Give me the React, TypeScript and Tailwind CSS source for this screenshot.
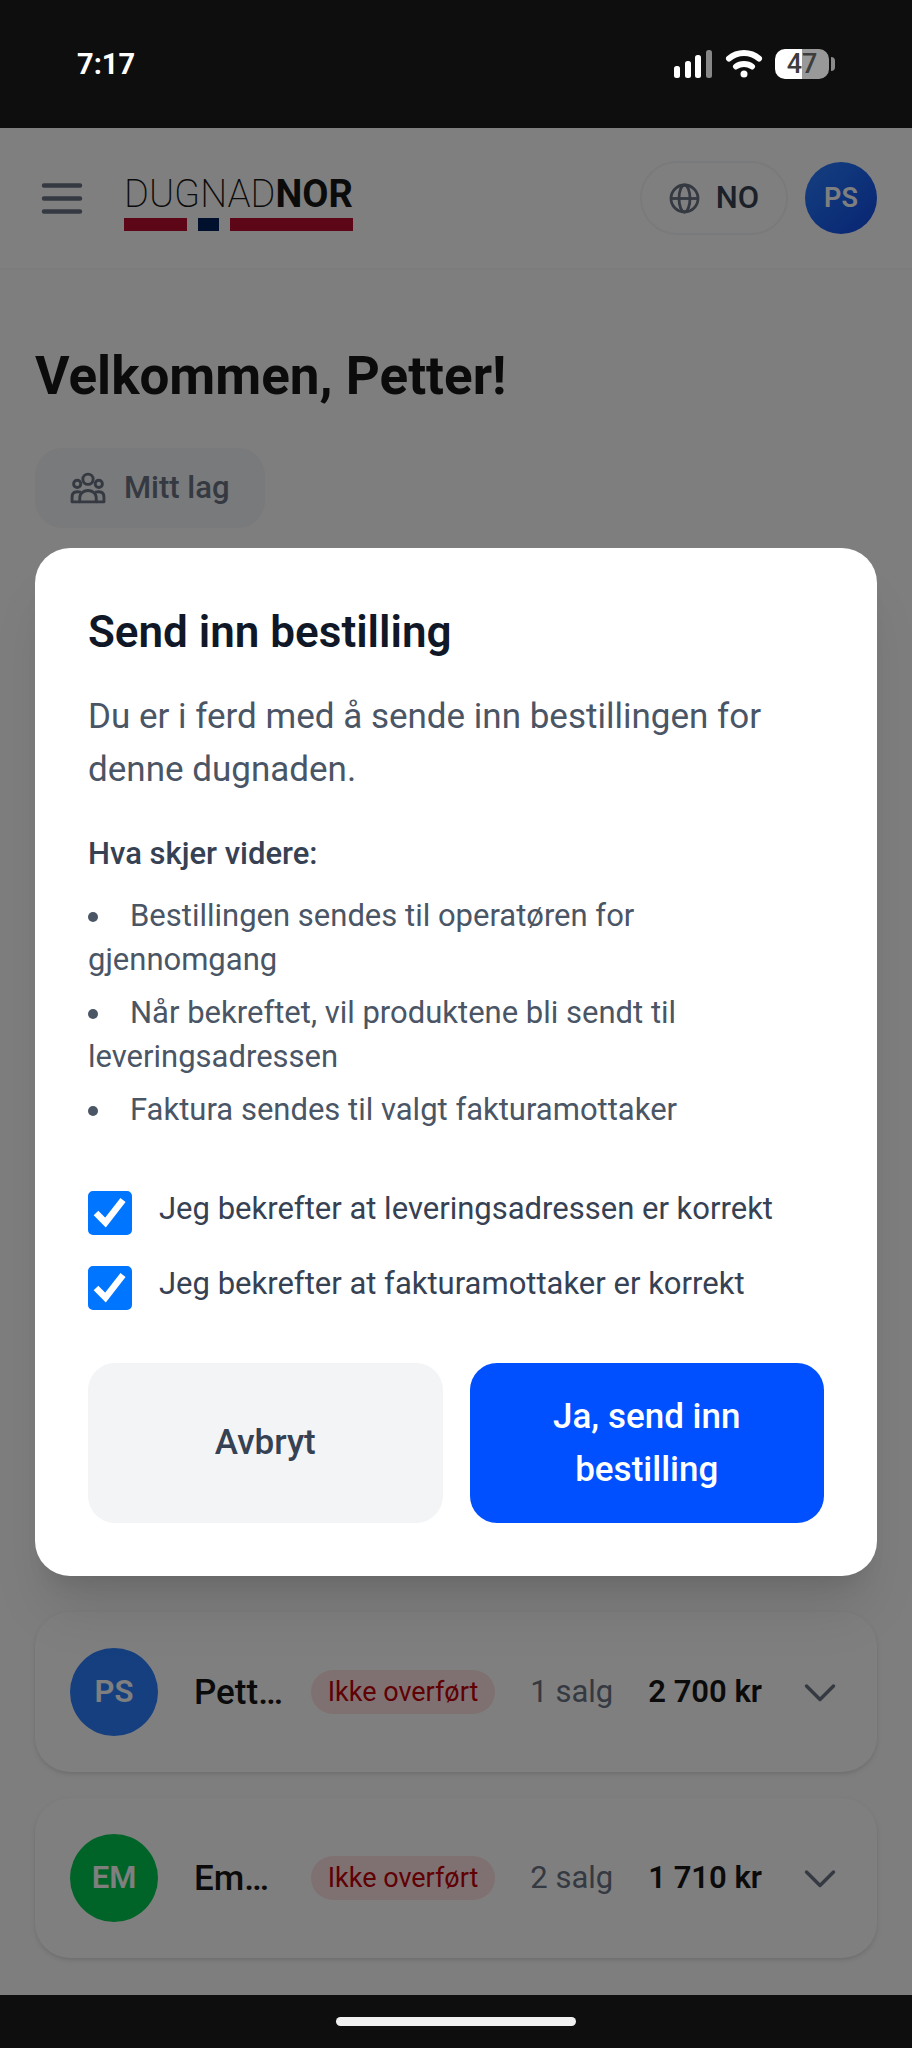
import React from "react";

interface Seller {
  initials: string;
  color: string;
  name: string;
  status: string;
  sales: string;
  total: string;
}

const sellers: Seller[] = [
  {
    initials: "PS",
    color: "bg-[#2b7fff]",
    name: "Pett…",
    status: "Ikke overført",
    sales: "1 salg",
    total: "2 700 kr",
  },
  {
    initials: "EM",
    color: "bg-[#00c950]",
    name: "Em…",
    status: "Ikke overført",
    sales: "2 salg",
    total: "1 710 kr",
  },
];

const nextSteps = [
  "Bestillingen sendes til operatøren for gjennomgang",
  "Når bekreftet, vil produktene bli sendt til leveringsadressen",
  "Faktura sendes til valgt fakturamottaker",
];

const confirmations = [
  { id: "address", label: "Jeg bekrefter at leveringsadressen er korrekt" },
  { id: "invoice", label: "Jeg bekrefter at fakturamottaker er korrekt" },
];

function StatusBar() {
  return (
    <div className="flex h-32 shrink-0 items-center justify-between bg-[#0e0e0e] px-[77px] text-white">
      <span className="text-[29px] leading-9 font-bold">7:17</span>
      <div className="flex items-center gap-3">
        <svg width="40" height="30" viewBox="0 0 40 30" fill="currentColor">
          <rect x="1" y="17" width="6" height="12" rx="2.5" />
          <rect x="12" y="12" width="6" height="17" rx="2.5" />
          <rect x="22" y="6" width="6" height="23" rx="2.5" />
          <rect x="33" y="1" width="6" height="28" rx="2.5" opacity=".5" />
        </svg>
        <svg
          width="38"
          height="30"
          viewBox="0 0 38 30"
          fill="none"
          stroke="currentColor"
          strokeWidth="6"
          strokeLinecap="round"
        >
          <path d="M4 9.500C12.500 2 25.500 2 34 9.500" />
          <path d="M11 17.500C15.500 14 22.500 14 27 17.500" />
          <circle cx="19" cy="25" r="3.500" fill="currentColor" stroke="none" />
        </svg>
        <div className="flex items-center gap-[2px]">
          <div className="flex h-[30px] w-[54px] items-center justify-center rounded-[10px] bg-linear-to-r from-white from-50% to-[#999999] to-50% text-[27px] leading-none font-medium text-[#3d3d3d]">
            47
          </div>
          <div className="h-[14px] w-1 rounded-r-full bg-[#8a8a8a]" />
        </div>
      </div>
    </div>
  );
}

function Logo() {
  return (
    <a href="#" aria-label="DugnadNor" className="block pt-[6px] text-[#171717]">
      <span className="block text-[38px] leading-[47px] whitespace-nowrap">
        <span className="font-extralight">DUGNAD</span>
        <span className="font-bold">NOR</span>
      </span>
      <span className="flex h-[13px]">
        <span className="w-[63px] bg-[#ba0c2f]" />
        <span className="ml-[11px] w-[21px] bg-[#00205b]" />
        <span className="ml-[11px] flex-1 bg-[#ba0c2f]" />
      </span>
    </a>
  );
}

function Header() {
  return (
    <header className="flex h-[142px] items-center border-b-2 border-[#f9f9f9] bg-white px-[35px]">
      <button type="button" aria-label="Meny" className="mr-9 text-gray-500">
        <svg
          width="53"
          height="53"
          viewBox="0 0 53 53"
          fill="none"
          stroke="currentColor"
          strokeWidth="4.500"
          strokeLinecap="round"
        >
          <path d="M9 13.500H45M9 26.500H45M9 39.500H45" />
        </svg>
      </button>
      <Logo />
      <div className="ml-auto flex items-center gap-[17px]">
        <button
          type="button"
          className="flex h-[74px] items-center gap-4 rounded-full border-2 border-gray-100 px-[27px] text-[31px] font-medium text-gray-700"
        >
          <svg
            width="31"
            height="31"
            viewBox="0 0 31 31"
            fill="none"
            stroke="#6a7282"
            strokeWidth="2.800"
          >
            <circle cx="15.500" cy="15.500" r="13.500" />
            <ellipse cx="15.500" cy="15.500" rx="5.500" ry="13.500" />
            <path d="M2 15.500H29" />
          </svg>
          NO
        </button>
        <button
          type="button"
          className="size-[72px] rounded-full bg-linear-to-br from-[#2b7fff] to-[#1447e6] text-[27px] font-semibold text-white"
        >
          PS
        </button>
      </div>
    </header>
  );
}

function SellerCard({ initials, color, name, status, sales, total }: Seller) {
  return (
    <li className="flex items-center rounded-[35px] bg-white px-[35px] py-9 shadow-[0_2px_6px_rgba(0,0,0,0.1),0_2px_4px_-2px_rgba(0,0,0,0.1)]">
      <span
        className={`flex size-[88px] shrink-0 items-center justify-center rounded-full text-[31px] font-semibold text-white ${color}`}
      >
        {initials}
      </span>
      <span className="ml-9 flex-1 truncate text-[35px] leading-[53px] font-medium text-[#171717]">
        {name}
      </span>
      <span className="rounded-full bg-[#ffe2e2] px-[17px] text-[27px] leading-[44px] text-[#c10007]">
        {status}
      </span>
      <span className="ml-[35px] text-[31px] leading-[44px] text-gray-500">
        {sales}
      </span>
      <span className="ml-[35px] text-[31px] leading-[44px] font-semibold text-[#171717]">
        {total}
      </span>
      <button
        type="button"
        aria-label="Vis detaljer"
        className="ml-9 text-gray-500"
      >
        <svg
          width="44"
          height="44"
          viewBox="0 0 44 44"
          fill="none"
          stroke="currentColor"
          strokeWidth="3.500"
          strokeLinecap="round"
          strokeLinejoin="round"
        >
          <path d="M8.500 16L22 29.500L35.500 16" />
        </svg>
      </button>
    </li>
  );
}

function Checkbox({ id }: { id: string }) {
  return (
    <span className="relative mt-1 size-[44px] shrink-0">
      <input
        id={id}
        type="checkbox"
        defaultChecked
        className="peer block size-full appearance-none rounded-[5px] border-2 border-gray-500 checked:border-[#0075ff] checked:bg-[#0075ff]"
      />
      <svg
        viewBox="0 0 44 44"
        fill="none"
        stroke="white"
        strokeWidth="6.500"
        className="pointer-events-none absolute inset-0 hidden size-full peer-checked:block"
      >
        <path d="M8 22L17.500 31.500L35 9" />
      </svg>
    </span>
  );
}

function ConfirmDialog() {
  return (
    <div
      role="dialog"
      aria-modal="true"
      aria-labelledby="dialog-title"
      className="w-full rounded-[35px] bg-white p-[53px] shadow-[0_44px_55px_-11px_rgba(0,0,0,0.1),0_18px_22px_-13px_rgba(0,0,0,0.1)]"
    >
      <h2
        id="dialog-title"
        className="text-[44px] leading-[62px] font-semibold text-gray-900"
      >
        Send inn bestilling
      </h2>
      <p className="mt-[27px] text-[35px] leading-[53px] text-gray-600">
        Du er i ferd med å sende inn bestillingen for denne dugnaden.
      </p>
      <h3 className="mt-9 text-[31px] leading-[44px] font-medium text-gray-700">
        Hva skjer videre:
      </h3>
      <ul className="mt-[18px] list-inside list-disc space-y-[9px] text-[31px] leading-[44px] text-gray-600">
        {nextSteps.map((step) => (
          <li key={step}>{step}</li>
        ))}
      </ul>
      <div className="mt-[55px] space-y-[27px]">
        {confirmations.map((c) => (
          <div key={c.id} className="flex items-start gap-[27px]">
            <Checkbox id={c.id} />
            <label
              htmlFor={c.id}
              className="text-[31px] leading-[44px] text-gray-700"
            >
              {c.label}
            </label>
          </div>
        ))}
      </div>
      <div className="mt-[53px] grid grid-cols-2 gap-[27px] text-[35px] leading-[53px] font-medium">
        <button
          type="button"
          className="rounded-[27px] bg-gray-100 p-[27px] text-gray-700"
        >
          Avbryt
        </button>
        <button
          type="button"
          className="rounded-[27px] bg-[#0050ff] p-[27px] text-white"
        >
          Ja, send inn bestilling
        </button>
      </div>
    </div>
  );
}

export default function App() {
  return (
    <div className="flex min-h-screen flex-col font-[Roboto,sans-serif]">
      <StatusBar />
      <div className="relative flex flex-1 flex-col bg-[#fdfdfd]">
        <Header />
        <main className="flex flex-1 flex-col px-[35px] pt-[71px] pb-[37px]">
          <h1 className="text-[53px] leading-[71px] font-bold text-[#171717]">
            Velkommen, Petter!
          </h1>
          <button
            type="button"
            className="mt-9 flex h-20 items-center gap-[18px] self-start rounded-[27px] bg-gray-100 px-[35px] text-[31px] font-medium text-gray-500"
          >
            <svg
              width="36"
              height="36"
              viewBox="0 0 35 35"
              fill="none"
              stroke="currentColor"
              strokeWidth="2.800"
              strokeLinejoin="round"
            >
              <circle cx="17.500" cy="9" r="5" />
              <circle cx="7" cy="13.500" r="3.500" />
              <circle cx="28" cy="13.500" r="3.500" />
              <path d="M9.500 31V27C9.500 17.500 25.500 17.500 25.500 27V31Z" />
              <path d="M9.500 31H2V26.500C2 21.500 5 20.500 10.500 21.500M25.500 31H33V26.500C33 21.500 30 20.500 24.500 21.500" />
            </svg>
            Mitt lag
          </button>
          <ul className="mt-auto flex flex-col gap-[26px]">
            {sellers.map((s) => (
              <SellerCard key={s.initials} {...s} />
            ))}
          </ul>
        </main>
        <div className="absolute inset-0 flex items-center justify-center bg-black/50 px-[35px]">
          <ConfirmDialog />
        </div>
      </div>
      <div className="flex h-[53px] shrink-0 items-center justify-center bg-[#0e0e0e]">
        <div className="h-[9px] w-60 rounded-full bg-[#f0f0f0]" />
      </div>
    </div>
  );
}
